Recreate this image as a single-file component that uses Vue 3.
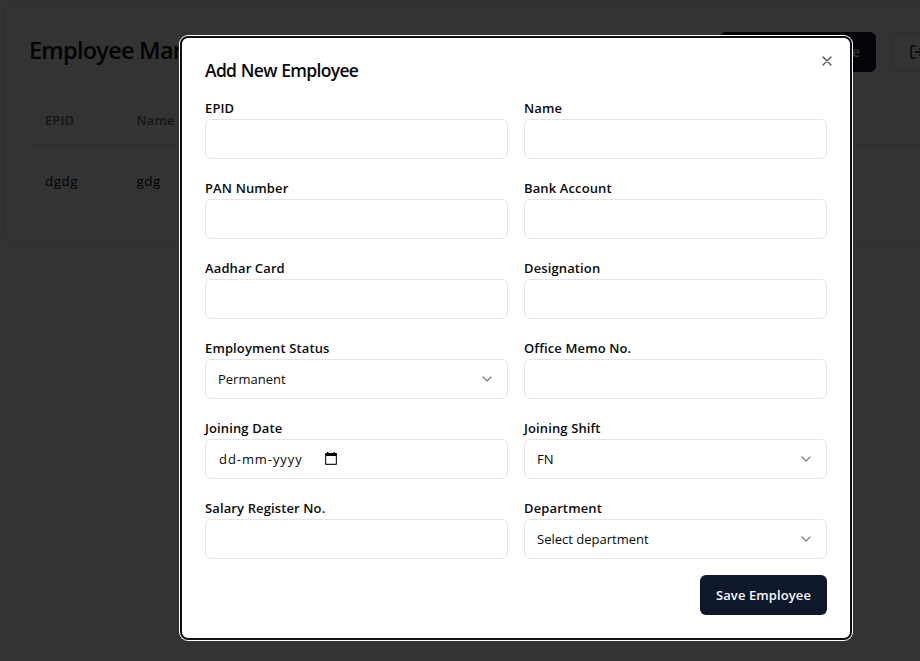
<script setup>
const fields = [
  { label: 'EPID', type: 'text' },
  { label: 'Name', type: 'text' },
  { label: 'PAN Number', type: 'text' },
  { label: 'Bank Account', type: 'text' },
  { label: 'Aadhar Card', type: 'text' },
  { label: 'Designation', type: 'text' },
  { label: 'Employment Status', type: 'select', value: 'Permanent' },
  { label: 'Office Memo No.', type: 'text' },
  { label: 'Joining Date', type: 'date', value: 'dd-mm-yyyy' },
  { label: 'Joining Shift', type: 'select', value: 'FN' },
  { label: 'Salary Register No.', type: 'text' },
  { label: 'Department', type: 'select', value: 'Select department' },
]
</script>

<template>
  <div class="screen">
    <section class="card">
      <header class="card-head">
        <h1>Employee Management</h1>
        <div class="actions">
          <button class="btn primary add">Add Employee</button>
          <button class="btn outline">
            <svg class="icon" viewBox="0 0 24 24"><path d="M9 21H5a2 2 0 0 1-2-2V5a2 2 0 0 1 2-2h4M16 17l5-5-5-5M21 12H9" /></svg>
            Logout
          </button>
        </div>
      </header>
      <div class="table">
        <div class="row head"><span>EPID</span><span>Name</span></div>
        <div class="row body"><span>dgdg</span><span>gdg</span></div>
      </div>
    </section>

    <div class="overlay">
      <div class="dialog" role="dialog">
        <h2>Add New Employee</h2>
        <button class="close" aria-label="Close">
          <svg class="icon" viewBox="0 0 24 24"><path d="M18 6 6 18M6 6l12 12" /></svg>
        </button>
        <div class="grid">
          <div v-for="f in fields" :key="f.label" class="field">
            <label>{{ f.label }}</label>
            <div class="control" :class="f.type">
              <span v-if="f.value">{{ f.value }}</span>
              <svg v-if="f.type === 'select'" class="icon chevron" viewBox="0 0 24 24"><path d="m6 9 6 6 6-6" /></svg>
              <svg v-if="f.type === 'date'" class="calendar" viewBox="0 0 12 13">
                <path d="M2 0h1.300v1h5.400V0H10v1h1q1 0 1 1v2H0V2q0-1 1-1h1z" />
                <path class="frame" d="M.6 3v9q0 .4.4.4h10q.4 0 .4-.4V3" />
              </svg>
            </div>
          </div>
        </div>
        <footer><button class="btn primary save">Save Employee</button></footer>
      </div>
    </div>
  </div>
</template>

<style>
html,
body {
  margin: 0;
  overflow: hidden;
}
</style>

<style scoped>
* {
  box-sizing: border-box;
}
.screen {
  position: relative;
  height: 661px;
  overflow: hidden;
  padding: 1px 0 0 4px;
  background: #fff;
  color: #0a0a0a;
  font-family: 'Open Sans', 'Noto Sans', sans-serif;
  font-size: 13.5px;
}
h1,
h2 {
  margin: 0;
  font-weight: 600;
}
button {
  font: inherit;
}
.icon {
  width: 16px;
  height: 16px;
  flex: none;
  fill: none;
  stroke: currentColor;
  stroke-width: 2;
  stroke-linecap: round;
  stroke-linejoin: round;
}
.card {
  width: 1021px;
  height: 242px;
  padding: 30px 24px 0;
  border: 1px solid #e5e5e5;
  border-radius: 8px;
}
.card-head {
  display: flex;
  justify-content: space-between;
  align-items: center;
  height: 40px;
}
h1 {
  font-size: 23.5px;
  line-height: 32px;
  letter-spacing: -0.75px;
  padding-bottom: 4px;
}
.actions {
  display: flex;
  gap: 16px;
}
.btn {
  display: flex;
  align-items: center;
  justify-content: center;
  gap: 8px;
  height: 40px;
  padding: 0 16px;
  border: 0;
  border-radius: 6px;
  font-weight: 600;
  white-space: nowrap;
}
.primary {
  background: #0f172a;
  color: #f8fafc;
}
.add {
  width: 156px;
  justify-content: flex-end;
}
.outline {
  width: 108px;
  justify-content: flex-start;
  border: 1px solid #e5e5e5;
  background: #fff;
  color: #0a0a0a;
}
.table {
  margin-top: 24px;
}
.row {
  display: flex;
  height: 73px;
  padding-left: 16px;
  align-items: center;
}
.row span {
  width: 91.5px;
}
.row.head {
  height: 49px;
  border-bottom: 1px solid #e5e5e5;
  color: #737373;
  font-weight: 600;
  font-size: 13px;
  letter-spacing: 0.1px;
}
.row.body {
  padding-bottom: 2px;
  letter-spacing: 0.45px;
}
.overlay {
  position: absolute;
  inset: 0;
  display: flex;
  align-items: flex-start;
  padding: 36px 0 0 180px;
  background: rgba(0, 0, 0, 0.8);
}
.dialog {
  position: relative;
  width: 672px;
  height: 604px;
  padding: 25px;
  border-radius: 8px;
  background: #fff;
  box-shadow: 0 0 0 1px #fff, inset 0 0 0 2px #101010;
}
h2 {
  font-size: 17.5px;
  line-height: 18px;
  letter-spacing: -0.67px;
  word-spacing: 0.5px;
}
.close {
  position: absolute;
  top: 17px;
  right: 17px;
  display: flex;
  padding: 0;
  border: 0;
  background: none;
  color: #0a0a0a;
  opacity: 0.7;
}
.grid {
  display: grid;
  grid-template-columns: 1fr 1fr;
  gap: 16px;
  margin-top: 16px;
}
label {
  display: block;
  height: 24px;
  line-height: 27px;
  font-size: 13px;
  font-weight: 600;
  letter-spacing: 0.12px;
}
.control {
  display: flex;
  align-items: center;
  justify-content: space-between;
  height: 40px;
  padding: 0 12px;
  border: 1px solid #e5e5e5;
  border-radius: 6px;
  font-size: 13px;
}
.control.date {
  justify-content: flex-start;
  gap: 22px;
  padding-left: 13px;
  letter-spacing: 0.93px;
}
.chevron {
  opacity: 0.5;
}
.calendar {
  width: 12px;
  height: 13px;
  margin-bottom: 1px;
}
.calendar .frame {
  fill: none;
  stroke: #222;
  stroke-width: 1.2;
}
footer {
  display: flex;
  justify-content: flex-end;
  margin-top: 16px;
}
.save {
  width: 127px;
  padding: 0;
  font-size: 13px;
  letter-spacing: 0.1px;
}
</style>
